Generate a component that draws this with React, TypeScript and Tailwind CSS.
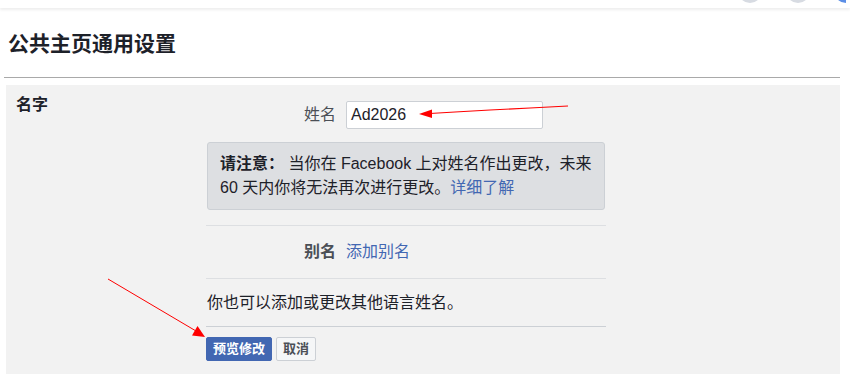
import React from "react";

const font = { fontFamily: '"Liberation Sans", "Noto Sans CJK SC", sans-serif' };

function Arrows() {
  return (
    <svg className="pointer-events-none absolute left-0 top-0" width="850" height="374" viewBox="0 0 850 374">
      <path d="M568 106 L530 108 L490 110 L455 112 L430 113.5" fill="none" stroke="#ff0000" strokeWidth="1.2" />
      <polygon points="419,114 432,109.5 432,118" fill="#ff0000" />
      <path d="M108 279 L196 331" fill="none" stroke="#ff0000" strokeWidth="1" />
      <polygon points="205,337 192,335.5 197.5,326" fill="#ff0000" />
    </svg>
  );
}

export default function App() {
  return (
    <div className="relative h-[374px] w-[850px] overflow-hidden bg-white text-[#1d2129]" style={font}>
      {/* top bar, mostly scrolled off */}
      <div className="flex h-[8px] justify-end gap-[24px] overflow-hidden bg-white pr-[4px] shadow-[0_2px_3px_rgba(0,0,0,0.07)]">
        <div className="-mt-[21px] h-[24px] w-[24px] rounded-full bg-[#d7dbe2]" />
        <div className="-mt-[21px] h-[24px] w-[24px] rounded-full bg-[#d7dbe2]" />
        <div className="-mt-[21px] h-[24px] w-[12px] rounded-l-full bg-[#5b8ee6]" />
      </div>

      <div className="ml-[4px] w-[836px]">
        <h1 className="pl-[4px] pt-[23px] text-[21px] font-bold leading-[25px] text-[#1d2129]">公共主页通用设置</h1>
        <div className="mt-[21px] h-px bg-[#a9a9a9]" />

        <div className="ml-[2px] mt-[7px] flex h-[320px] bg-[#f2f2f2]">
          <div className="w-[200px] pl-[10px] pt-[10px] text-[16px] font-bold leading-[20px]">名字</div>

          <div className="w-[400px] pt-[16px]">
            <div className="flex items-center">
              <div className="w-[130px] text-right text-[16px] leading-[28px] text-[#4b4f56]">姓名</div>
              <div className="ml-[10px] flex h-[28px] w-[197px] items-center rounded-[2px] border border-[#ccd0d5] bg-white px-[4px] text-[16px]">
                Ad2026
              </div>
            </div>

            <div className="ml-px mt-[13px] h-[68px] w-[398px] rounded-[3px] border border-[#ccd0d5] bg-[#dddfe2] px-[12px] py-[9px] text-[16px] leading-[24px] whitespace-nowrap">
              <span className="font-bold">请注意：</span> 当你在 Facebook 上对姓名作出更改，未来
              <br />
              60 天内你将无法再次进行更改。<span className="text-[#4267b2]">详细了解</span>
            </div>

            <div className="mt-[15px] h-px bg-[#dddfe2]" />
            <div className="flex items-center py-[14px]">
              <div className="w-[130px] text-right text-[16px] font-bold leading-[24px] text-[#4b4f56]">别名</div>
              <div className="ml-[10px] text-[16px] leading-[24px] text-[#4267b2]">添加别名</div>
            </div>
            <div className="h-px bg-[#dddfe2]" />
            <div className="pl-px py-[12px] text-[16px] leading-[23px]">你也可以添加或更改其他语言姓名。</div>
            <div className="h-px bg-[#ccd0d5]" />

            <div className="mt-[10px] flex gap-[4px]">
              <button className="h-[24px] rounded-[2px] border border-[#4267b2] bg-[#4267b2] px-[6px] text-[13px] font-bold leading-[22px] text-white">
                预览修改
              </button>
              <button className="h-[24px] rounded-[2px] border border-[#ccd0d5] bg-[#f5f6f7] px-[6px] text-[13px] font-bold leading-[22px] text-[#4b4f56]">
                取消
              </button>
            </div>
          </div>
        </div>
      </div>

      <Arrows />
    </div>
  );
}
